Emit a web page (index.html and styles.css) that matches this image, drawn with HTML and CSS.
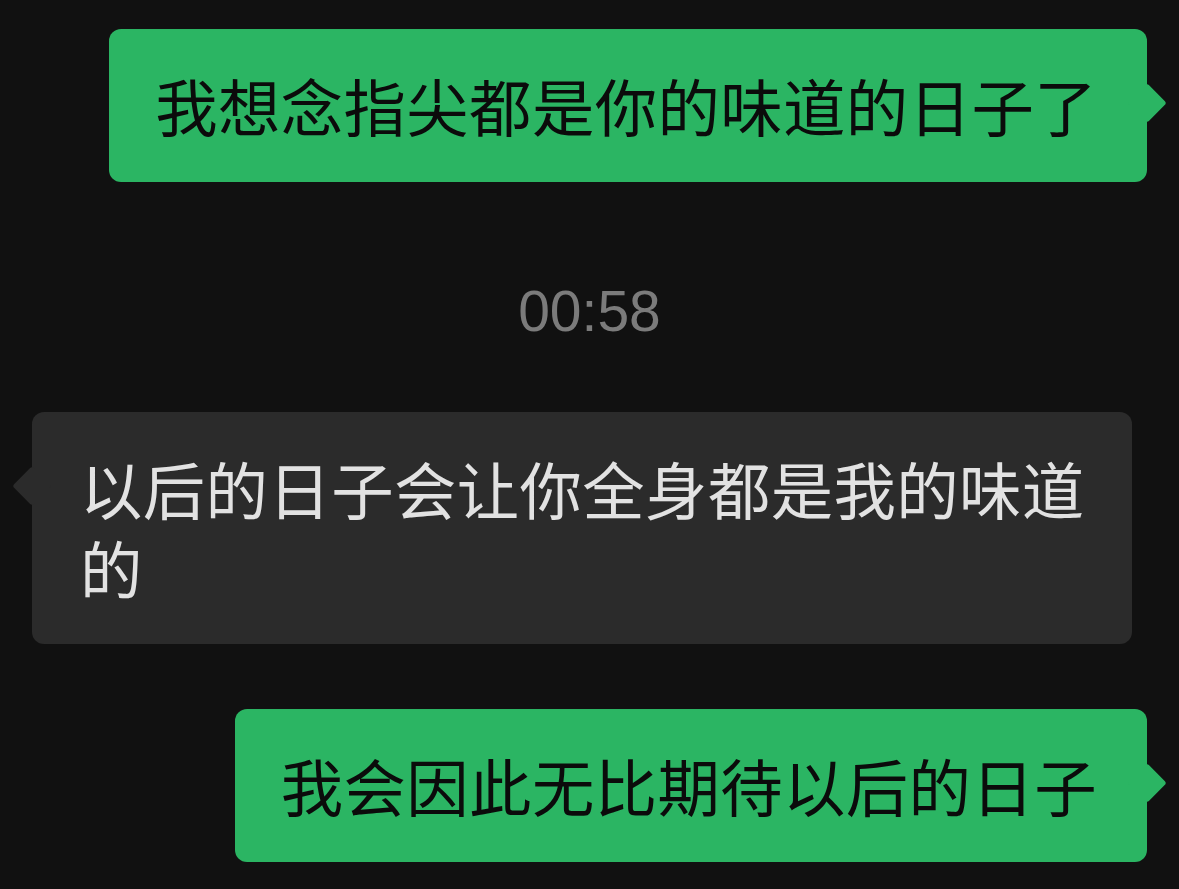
FILE: index.html
```html
<!DOCTYPE html>
<html lang="zh-CN">
<head>
    <meta charset="UTF-8">
    <meta name="viewport" content="width=device-width, initial-scale=1.0">
    <title>聊天记录</title>
    <link rel="stylesheet" href="styles.css">
</head>
<body>
    <div class="chat">
        <div class="row row-self">
            <div class="bubble bubble-self">我想念指尖都是你的味道的日子了</div>
        </div>

        <div class="time">00:58</div>

        <div class="row row-other">
            <div class="bubble bubble-other">以后的日子会让你全身都是我的味道的</div>
        </div>

        <div class="row row-self row-last">
            <div class="bubble bubble-self">我会因此无比期待以后的日子</div>
        </div>
    </div>
</body>
</html>
```

FILE: styles.css
```css
body {
    margin: 0;
    background: #111111;
    font-family: "Noto Sans CJK SC", "Noto Sans", sans-serif;
}
.chat {
    display: flex;
    flex-direction: column;
    padding: 29px 32px 0 32px;
}
.row {
    display: flex;
}
.row-self {
    justify-content: flex-end;
}
.row-other {
    justify-content: flex-start;
}
.row-last {
    margin-top: 65px;
}
.bubble {
    position: relative;
    max-width: 1100px;
    box-sizing: border-box;
    padding: 37px 50px 37px 46px;
    border-radius: 12px;
    font-size: 62.4px;
    line-height: 79px;
    letter-spacing: 0.4px;
}
.bubble-self {
    background: #2bb563;
    color: #0b0b0b;
}
.bubble-other {
    padding-left: 48px;
    padding-right: 46px;
    background: #2b2b2b;
    color: #e2e2e2;
}
.bubble::after {
    content: "";
    position: absolute;
    top: 60px;
    width: 28px;
    height: 28px;
    border-radius: 3px;
    transform: rotate(45deg);
}
.bubble-self::after {
    right: -14px;
    background: #2bb563;
}
.bubble-other::after {
    left: -14px;
    background: #2b2b2b;
}
.time {
    margin: 99px 0 71px 0;
    text-align: center;
    font-family: "Liberation Sans", Arial, sans-serif;
    font-size: 57px;
    line-height: 60px;
    color: #7b7b7b;
}
```
